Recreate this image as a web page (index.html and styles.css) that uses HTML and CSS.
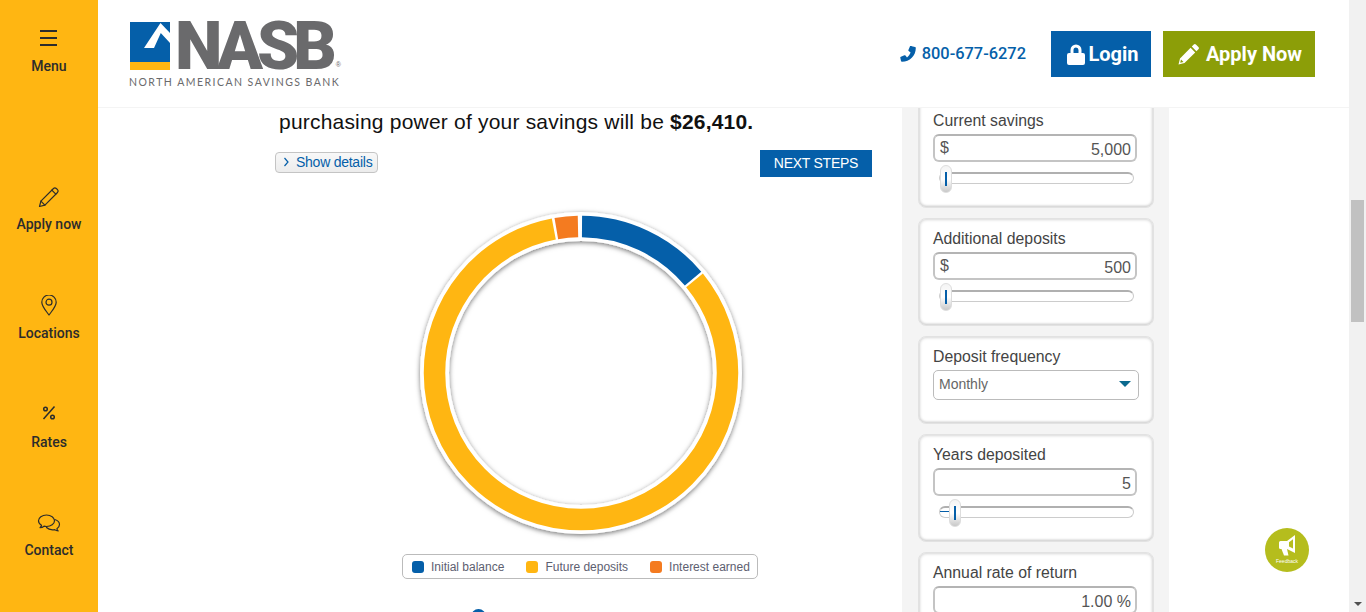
FILE: index.html
```html
<!DOCTYPE html>
<html lang="en">
<head>
<meta charset="utf-8">
<title>NASB Savings Calculator</title>
<link rel="stylesheet" href="styles.css">
</head>
<body>
<aside class="sidebar">
  <a class="side-item side-menu">
    <svg class="side-icon" width="20" height="20" viewBox="0 0 20 20"><path d="M1 3h17M1 10h17M1 17h17" class="stroke-thick"/></svg>
    <span>Menu</span>
  </a>
  <a class="side-item">
    <svg class="side-icon" width="22" height="22" viewBox="0 0 22 22"><path class="stroke" d="M1.500 20.500l1.400-5.400L15.500 2.500a2 2 0 0 1 2.800 0l1.200 1.200a2 2 0 0 1 0 2.800L6.900 19.100z"/><path class="stroke" d="M13.800 4.200l4 4M2.900 15.100l4 4"/></svg>
    <span>Apply now</span>
  </a>
  <a class="side-item">
    <svg class="side-icon" width="22" height="22" viewBox="0 1 22 22"><path class="stroke" d="M11 1a7.200 7.200 0 0 1 7.200 7.200c0 4-3.700 8-7.200 12.800C7.500 16.200 3.800 12.200 3.800 8.200A7.200 7.200 0 0 1 11 1z"/><circle class="stroke" cx="11" cy="8.200" r="3"/></svg>
    <span>Locations</span>
  </a>
  <a class="side-item side-rates">
    <svg class="side-icon" width="22" height="22" viewBox="0 0 22 22"><path class="stroke-mid" d="M16.500 3.500L5.500 16"/><circle class="stroke-mid" cx="7.500" cy="6" r="1.800"/><circle class="stroke-mid" cx="14.500" cy="14" r="1.800"/></svg>
    <span>Rates</span>
  </a>
  <a class="side-item">
    <svg class="side-icon" width="24" height="22" viewBox="0 0 24 22"><path class="stroke" d="M9.500 3C5 3 1.500 5.500 1.500 8.800c0 1.900 1.200 3.500 3 4.500-.2 1-.8 1.700-1.500 2.300 1.500 0 3-.5 4-1.400.8.200 1.700.3 2.500.3 4.500 0 8-2.500 8-5.700S14 3 9.500 3z"/><path class="stroke" d="M17.800 7.500c2.800.8 4.700 2.800 4.700 5.100 0 1.700-1 3.100-2.600 4.100.1.900.7 1.700 1.300 2.200-1.400 0-2.700-.5-3.600-1.300-.7.200-1.400.2-2.100.2-2.500 0-4.700-.9-6-2.300"/></svg>
    <span>Contact</span>
  </a>
</aside>

<div class="page">
  <header class="topbar">
    <div class="logo">
      <div class="logo-mark">
        <svg width="41" height="48" viewBox="0 0 41 48"><rect width="40" height="40" fill="#055fa9"/><rect y="40" width="40" height="8" fill="#ffb612"/><path d="M30.500 1L40 11v10L30.800 11 24 26H14z" fill="#fff"/></svg>
        <span class="logo-word">NASB</span><span class="logo-reg">®</span>
      </div>
      <div class="logo-tag">NORTH AMERICAN SAVINGS BANK</div>
    </div>
    <a class="phone">
      <svg width="16" height="16" viewBox="0 0 16 16"><path fill="#055fa9" d="M11.800.3L15 1a1 1 0 0 1 .8 1C15.800 9.800 9.800 15.800 2 15.800a1 1 0 0 1-1-.8L.3 11.800a1 1 0 0 1 .6-1.100l3.500-1.500a1 1 0 0 1 1.100.3l1.500 1.900C9 9.500 9.500 9 10.600 6.500L8.700 5a1 1 0 0 1-.3-1.100l1.500-3.500a1 1 0 0 1 1.900-.1z"/></svg>
      <span>800-677-6272</span>
    </a>
    <a class="cta cta-login">
      <svg width="18" height="21" viewBox="0 0 18 21"><path fill="#fff" d="M3.500 9V6a5.500 5.500 0 0 1 11 0v3h1.500a2 2 0 0 1 2 2v8a2 2 0 0 1-2 2H2a2 2 0 0 1-2-2v-8a2 2 0 0 1 2-2zm3 0h5V6a2.500 2.500 0 0 0-5 0z"/></svg>
      <span>Login</span>
    </a>
    <a class="cta cta-apply">
      <svg width="21" height="21" viewBox="0 0 21 21"><path fill="#fff" d="M15.800.6a1.500 1.500 0 0 1 2.100 0l2.500 2.500a1.500 1.500 0 0 1 0 2.100l-2 2-4.600-4.600zM12.600 3.800l4.600 4.600L6.500 19.100.5 20.500 2 14.500zM3 15.500l-.8 3.300 3.300-.8z"/></svg>
      <span>Apply Now</span>
    </a>
  </header>

  <main class="content">
    <section class="calc">
      <p class="summary">purchasing power of your savings will be <strong>$26,410.</strong></p>
      <div class="actions">
        <button class="details"><svg width="7" height="10" viewBox="0 0 7 10"><path d="M1.500 1l3.500 4-3.500 4" fill="none" stroke="#055fa9" stroke-width="1.200"/></svg>Show details</button>
        <button class="next">NEXT STEPS</button>
      </div>
      <div class="chart">
        <svg width="340" height="340" viewBox="0 0 340 340">
          <defs><filter id="soft" x="-10%" y="-10%" width="120%" height="120%"><feDropShadow dx="0" dy="1.500" stdDeviation="2.500" flood-color="#000" flood-opacity=".55"/></filter></defs>
          <circle cx="170" cy="170" r="146.500" fill="none" stroke="#fff" stroke-width="29" filter="url(#soft)"/>
          <g transform="rotate(-90 170 170)" fill="none" stroke-width="21.500">
            <circle cx="170" cy="170" r="146.500" pathLength="360" stroke="#ffb612" stroke-dasharray="298.500 61.500" stroke-dashoffset="-50.800"/>
            <circle cx="170" cy="170" r="146.500" pathLength="360" stroke="#f47b20" stroke-dasharray="8.500 351.500" stroke-dashoffset="-350.300"/>
            <circle cx="170" cy="170" r="146.500" pathLength="360" stroke="#055fa9" stroke-dasharray="49.500 310.500" stroke-dashoffset="-.4"/>
          </g>
        </svg>
      </div>
      <div class="legend">
        <span class="legend-item"><i class="swatch swatch-blue"></i>Initial balance</span>
        <span class="legend-item"><i class="swatch swatch-yellow"></i>Future deposits</span>
        <span class="legend-item"><i class="swatch swatch-orange"></i>Interest earned</span>
      </div>
      <span class="pager-dot"></span>
    </section>

    <section class="inputs">
      <div class="card card-first">
        <label>Current savings</label>
        <div class="field"><span>$</span><span>5,000</span></div>
        <div class="slider"><i class="slider-fill slider-fill-0"></i><i class="thumb"></i></div>
      </div>
      <div class="card">
        <label>Additional deposits</label>
        <div class="field"><span>$</span><span>500</span></div>
        <div class="slider"><i class="slider-fill slider-fill-0"></i><i class="thumb"></i></div>
      </div>
      <div class="card card-select">
        <label>Deposit frequency</label>
        <div class="select"><span>Monthly</span><i class="caret"></i></div>
      </div>
      <div class="card">
        <label>Years deposited</label>
        <div class="field field-end"><span>5</span></div>
        <div class="slider"><i class="slider-fill slider-fill-5"></i><i class="thumb"></i></div>
      </div>
      <div class="card">
        <label>Annual rate of return</label>
        <div class="field field-end"><span>1.00 %</span></div>
      </div>
    </section>

    <a class="feedback">
      <svg width="20" height="22" viewBox="0 0 20 22"><path fill="#fff" fill-rule="evenodd" d="M18 0v18l-8-4H3.500A1.500 1.500 0 0 1 2 12.500v-5A1.500 1.500 0 0 1 3.500 6H10zM16 4.200l-4 3v4.300l4 2z"/><path fill="#fff" d="M4.500 14H10l1.500 6.500H7z"/></svg>
      <span>Feedback</span>
    </a>
  </main>
</div>

<div class="scrollbar">
  <i class="scroll-thumb"></i>
  <i class="scroll-arrow"></i>
</div>
</body>
</html>
```

FILE: styles.css
```css
* { box-sizing: border-box; }
html, body { height: 100%; }
body {
  margin: 0;
  display: flex;
  height: 612px;
  overflow: hidden;
  background: #fff;
  font-family: "Liberation Sans", Arial, sans-serif;
  color: #111;
}

/* Sidebar */
.sidebar {
  width: 98px;
  flex: none;
  background: #ffb612;
  display: flex;
  flex-direction: column;
  font-family: Roboto, sans-serif;
  font-weight: 500;
  font-size: 14px;
  color: #2c2c2c;
}
.side-item {
  flex: none;
  height: 108.600px;
  display: flex;
  flex-direction: column;
  align-items: center;
  gap: 8px;
}
.side-item span { line-height: 17px; }
.side-menu { height: 186px; padding-top: 28px; gap: 10px; }
.side-rates { gap: 9px; }
.side-icon { display: block; flex: none; }
.stroke, .stroke-mid, .stroke-thick { fill: none; stroke: #2c2c2c; }
.stroke { stroke-width: 1.200; stroke-linejoin: round; stroke-linecap: round; }
.stroke-mid { stroke-width: 1.500; }
.stroke-thick { stroke-width: 2; }

/* Page */
.page {
  flex: 1;
  min-width: 0;
  display: flex;
  flex-direction: column;
}
.topbar {
  height: 108px;
  flex: none;
  display: flex;
  align-items: flex-start;
  padding: 22px 34px 0 31px;
  background: #fff;
  border-bottom: 1px solid #f4f4f4;
}
.logo { width: 240px; flex: none; }
.logo-mark { display: flex; height: 48px; align-items: flex-start; padding-left: 1px; }
.logo-mark svg { display: block; flex: none; }
.logo-word {
  margin-left: 4px;
  font-family: Roboto, sans-serif;
  font-weight: 900;
  font-size: 67.500px;
  line-height: 48px;
  letter-spacing: -6px;
  color: #6a6a6c;
}
.logo-reg { font-size: 7px; margin: 39px 0 0 5px; color: #6a6a6c; line-height: 8px; }
.logo-tag {
  margin-top: 7px;
  font-family: Lato, sans-serif;
  font-size: 10.500px;
  line-height: 11px;
  letter-spacing: 1.470px;
  color: #6a6a6c;
  white-space: nowrap;
}
.phone {
  margin: 22px 0 0 auto;
  display: flex;
  align-items: center;
  gap: 6px;
  font-family: Roboto, sans-serif;
  font-weight: 500;
  font-size: 16.400px;
  line-height: 20px;
  color: #055fa9;
}
.cta {
  height: 46px;
  margin-top: 9px;
  display: flex;
  align-items: center;
  justify-content: center;
  color: #fff;
  font-family: Roboto, sans-serif;
  font-weight: 700;
  font-size: 20px;
}
.cta-login { width: 100px; margin-left: 25px; gap: 3px; padding-left: 4px; background: #055fa9; }
.cta-apply { width: 152px; margin-left: 12px; gap: 7px; padding-left: 2px; background: #8c9e08; }

/* Content */
.content {
  position: relative;
  flex: 1;
  min-height: 0;
  overflow: hidden;
  display: flex;
  padding-left: 177px;
}
.calc { width: 597px; flex: none; }
.summary {
  margin: 0;
  padding-left: 4px;
  font-size: 21px;
  line-height: 28px;
  letter-spacing: .2px;
  white-space: nowrap;
}
.actions {
  margin-top: 14px;
  display: flex;
  justify-content: space-between;
  align-items: flex-start;
}
.details {
  margin-top: 2px;
  width: 103px;
  height: 21px;
  padding: 0 0 1px 7px;
  display: flex;
  align-items: center;
  gap: 6px;
  border: 1px solid #c4c4c4;
  border-radius: 4px;
  background: linear-gradient(#f8f8f8, #ececec);
  color: #055fa9;
  font: 14px "Liberation Sans", Arial, sans-serif;
  letter-spacing: -.25px;
}
.next {
  width: 112px;
  height: 27px;
  padding: 0 0 1px;
  border: 0;
  background: #055fa9;
  color: #fff;
  font: 14px "Liberation Sans", Arial, sans-serif;
  letter-spacing: -.25px;
}
.chart { margin: 26px 0 0 136px; height: 340px; }
.chart svg { display: block; }
.legend {
  margin: 11px 0 0 127px;
  width: 356px;
  height: 25px;
  display: flex;
  align-items: center;
  padding-left: 9px;
  gap: 22px;
  border: 1px solid #bbb;
  border-radius: 5px;
  font-size: 12px;
  color: #5d6070;
  white-space: nowrap;
}
.legend-item { display: flex; align-items: center; gap: 7px; }
.swatch { width: 12px; height: 12px; border-radius: 3px; }
.swatch-blue { background: #055fa9; }
.swatch-yellow { background: #ffb612; }
.swatch-orange { background: #f47b20; }
.pager-dot {
  display: block;
  width: 15px;
  height: 15px;
  margin: 30px 0 0 196px;
  border-radius: 50%;
  background: #055fa9;
}

/* Inputs */
.inputs {
  width: 267px;
  flex: none;
  margin-left: 30px;
  padding: 0 15px 0 16px;
  background: #f4f4f4;
  display: flex;
  flex-direction: column;
  gap: 10px;
}
.card {
  flex: none;
  height: 108px;
  padding: 9px 14px 0 14px;
  background: #fff;
  border-radius: 8px;
  box-shadow: inset 0 0 3px 1px #d8d8d8, inset 0 -1px 2px #d0d0d0;
  border: 1px solid #e2e2e2;
}
.card-first { margin-top: -8px; }
.card-select { height: 88px; }
.card label {
  display: block;
  font-size: 15.800px;
  line-height: 22px;
  color: #444;
  white-space: nowrap;
}
.field {
  margin-top: 2px;
  width: 204px;
  height: 28px;
  padding: 0 4px 0 5px;
  display: flex;
  justify-content: space-between;
  align-items: center;
  background: #fff;
  border: 2px solid #c4c4c4;
  border-top-color: #b4b4b4;
  border-radius: 6px;
  font-size: 16px;
  color: #555;
}
.field span:last-child { margin-top: 3px; }
.field-end { justify-content: flex-end; }
.select {
  margin-top: 2px;
  width: 206px;
  height: 30px;
  padding: 0 7px 2px 5px;
  display: flex;
  justify-content: space-between;
  align-items: center;
  border: 1px solid #bbb;
  border-radius: 5px;
  font-size: 14px;
  color: #666;
}
.caret {
  width: 0;
  height: 0;
  border: 6.500px solid transparent;
  border-top: 6px solid #0b6a8f;
  border-bottom: 0;
}
.slider {
  position: relative;
  margin: 10px 0 0 6px;
  width: 195px;
  height: 12px;
  background: #fff;
  border: 1px solid #ccc;
  border-top: 2px solid #b0b0b0;
  border-radius: 6px;
}
.slider-fill {
  position: absolute;
  left: 0;
  top: 3px;
  height: 1px;
  background: #055fa9;
}
.slider-fill-0 { width: 4px; }
.slider-fill-5 { width: 13px; }
.thumb {
  position: absolute;
  left: 0;
  top: -9px;
  width: 12px;
  height: 28px;
  border-radius: 6px;
  background: linear-gradient(#f4f4f4, #fff 50%, #c8c8c8);
  border: 1px solid #ddd;
}
.thumb::after {
  content: "";
  position: absolute;
  left: 4px;
  top: 6px;
  width: 2px;
  height: 14px;
  background: #055fa9;
}
.slider-fill-5 + .thumb { left: 9px; }

/* Feedback */
.feedback {
  position: absolute;
  right: 40px;
  top: 420px;
  width: 44px;
  height: 44px;
  border-radius: 50%;
  background: #b5bd1d;
  display: flex;
  flex-direction: column;
  align-items: center;
  padding-top: 7px;
  gap: 1px;
  color: #fff;
  font-size: 5px;
  line-height: 6px;
}
.feedback svg { display: block; flex: none; }

/* Scrollbar */
.scrollbar {
  position: relative;
  width: 17px;
  flex: none;
  background: #f1f1f1;
}
.scroll-thumb {
  display: block;
  margin: 200px 2px 0;
  height: 122px;
  background: #c1c1c1;
}
.scroll-arrow {
  position: absolute;
  left: 5px;
  bottom: 6px;
  width: 0;
  height: 0;
  border: 4px solid transparent;
  border-top: 4px solid #505050;
  border-bottom: 0;
}
```
